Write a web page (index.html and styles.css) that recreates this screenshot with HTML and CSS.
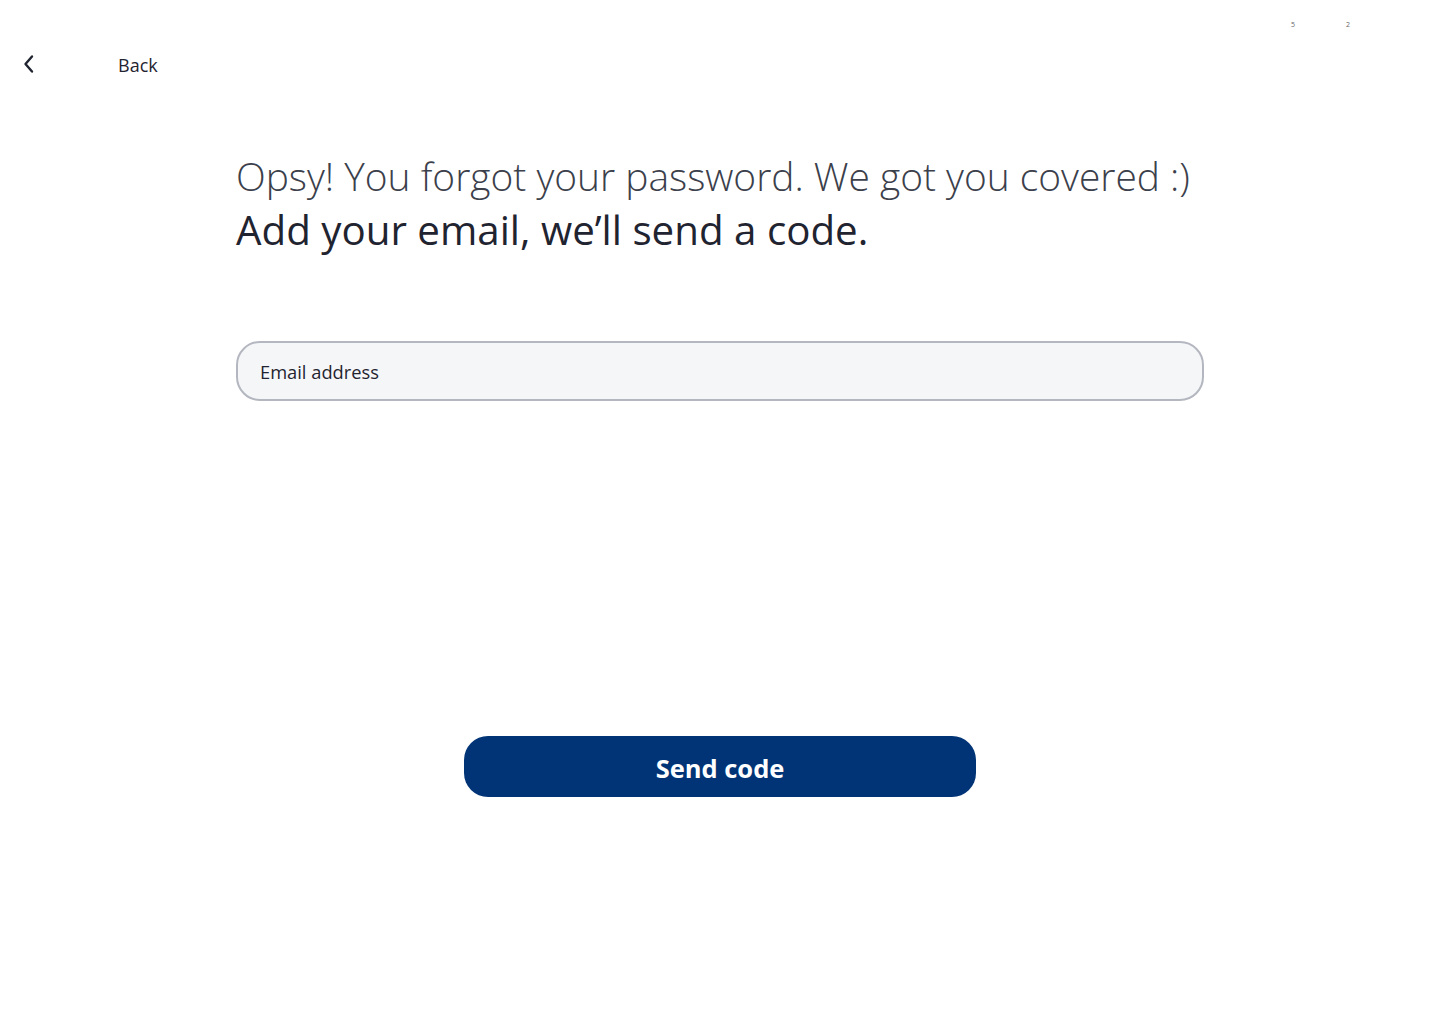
FILE: index.html
```html
<!DOCTYPE html>
<html lang="en">
<head>
<meta charset="utf-8">
<title>Forgot password</title>
<link rel="stylesheet" href="styles.css">
</head>
<body>
<div class="page">
  <div class="status">
    <span class="dot">5</span>
    <span class="dot">2</span>
  </div>
  <header class="topbar">
    <button class="back-icon" aria-label="Back">
      <svg width="14" height="20" viewBox="0 0 14 20" fill="none"><path d="M10 2.5 L3.5 10 L10 17.5" stroke="#1f2430" stroke-width="2.4" stroke-linecap="round" stroke-linejoin="round"/></svg>
    </button>
    <span class="back-label">Back</span>
  </header>
  <main class="content">
    <h1 class="title">
      <span class="light">Opsy! You forgot your password. We got you covered :)</span>
      <span class="regular">Add your email, we’ll send a code.</span>
    </h1>
    <div class="field">
      <input class="input" type="email" placeholder="Email address">
    </div>
    <div class="actions">
      <button class="primary">Send code</button>
    </div>
  </main>
</div>
</body>
</html>
```
FILE: styles.css
```css
* { box-sizing: border-box; }
html, body { margin: 0; padding: 0; background: #fff; }
body { font-family: "Open Sans", "Noto Sans", sans-serif; color: #1f2430; }
.page { width: 1440px; height: 1024px; position: relative; }
.status {
  position: absolute; top: 20px; left: 1291px;
  display: flex; gap: 51px; font-size: 7px; color: #666;
}
.topbar {
  display: flex; align-items: center;
  padding: 50px 0 0 19px;
  height: 77px;
}
.back-icon {
  background: none; border: 0; padding: 0; margin: 0;
  width: 20px; height: 24px; display: flex; align-items: center; justify-content: center;
}
.back-label { margin-left: 79px; font-size: 18px; color: #1f2430; margin-top: 2px; }
.content { width: 968px; margin: 0 auto; padding-top: 72px; }
.title { margin: 0; font-weight: 400; font-size: 40.3px; line-height: 54px; color: #1f2430; }
.title span { display: block; white-space: nowrap; }
.light { font-weight: 300; font-size: 38.9px; color: #3b404b; }
.field { margin-top: 84px; }
.input {
  width: 100%; height: 60px; border: 2px solid #b4b7c0; border-radius: 24px;
  background: #f5f6f8; padding: 0 22px; font-family: inherit; font-size: 18.3px; color: #1f2430;
  outline: none;
}
.input::placeholder { color: #1f2430; opacity: 1; }
.actions { display: flex; justify-content: center; margin-top: 335px; }
.primary {
  width: 512px; height: 61px; border: 0; border-radius: 24px; padding: 2px 0 0;
  background: #013476; color: #fff; font-family: inherit; font-weight: 700; font-size: 25.5px;
}
```
